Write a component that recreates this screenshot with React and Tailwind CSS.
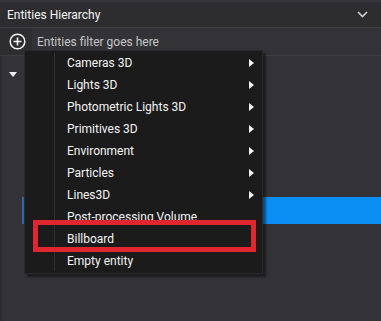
import React from 'react';

const menuItems = [
  { label: 'Cameras 3D', sub: true },
  { label: 'Lights 3D', sub: true },
  { label: 'Photometric Lights 3D', sub: true },
  { label: 'Primitives 3D', sub: true },
  { label: 'Environment', sub: true },
  { label: 'Particles', sub: true },
  { label: 'Lines3D', sub: true },
  { label: 'Post-processing Volume', sub: false },
  { label: 'Billboard', sub: false, marked: true },
  { label: 'Empty entity', sub: false },
];

const SubArrow = () => (
  <svg width="5" height="8" viewBox="0 0 5 8">
    <path d="M0 0 L5 4 L0 8 Z" fill="#f2f2f2" />
  </svg>
);

const App = () => {
  return (
    <div
      className="relative w-[381px] h-[321px] overflow-hidden bg-[#2d2d30] text-[#f4f4f4] flex flex-col"
      style={{ fontFamily: 'Roboto, "Noto Sans", sans-serif' }}
    >
      {/* header */}
      <div className="h-[28px] border-t-2 border-[#38383c] border-b border-b-[#3e3e42] flex items-center justify-between pl-[7px] pr-[13px]">
        <span className="text-[12px] leading-none">Entities Hierarchy</span>
        <svg width="11" height="7" viewBox="0 0 11 7">
          <path d="M1 1 L5.5 5.5 L10 1" stroke="#d0d0d0" strokeWidth="1.6" fill="none" />
        </svg>
      </div>

      {/* filter row */}
      <div className="h-[28px] flex border-b border-[#3e3e42]">
        <div className="w-[32px] flex items-center justify-center pl-[2px]">
          <svg width="17" height="17" viewBox="0 0 17 17">
            <circle cx="8.5" cy="8.5" r="7.3" stroke="#f4f4f4" strokeWidth="1.5" fill="none" />
            <path d="M8.5 4.5 V12.5 M4.5 8.5 H12.5" stroke="#f4f4f4" strokeWidth="1.6" />
          </svg>
        </div>
        <div className="flex-1 bg-[#333337] flex items-center pl-[5px] text-[12px] text-[#c6c6c6]">
          Entities filter goes here
        </div>
      </div>

      {/* tree */}
      <div className="flex-1 bg-[#333337] border-l-2 border-[#2d2d30] pt-[6px]">
        <div className="h-[27px] flex items-start pl-[7px] pt-[10px]">
          <svg width="8" height="5" viewBox="0 0 8 5">
            <path d="M0 0 H8 L4 5 Z" fill="#f0f0f0" />
          </svg>
        </div>
        <div className="h-[108px]" />
        <div className="h-[27px] ml-[20px] bg-[#0a8ef2] border-l-2 border-[#2f66a3]" />
      </div>

      {/* context menu */}
      <div className="absolute left-[24px] top-[50px] w-[239px] bg-[#1b1b1c] border border-[#2a2a2d] py-[1px] shadow-[3px_3px_2px_rgba(0,0,0,0.45)]">
        <div className="absolute left-[29px] top-[2px] bottom-[2px] w-px bg-[#303033]" />
        {menuItems.map((item) => (
          <div key={item.label} className="relative h-[22px] flex items-center pl-[42px] pr-[8px] text-[12px]">
            <span className="flex-1">{item.label}</span>
            {item.sub && <SubArrow />}
            {item.marked && (
              <div className="absolute left-[8px] top-[-8px] w-[223px] h-[32px] border-[5px] border-[#e0262e]" />
            )}
          </div>
        ))}
      </div>
    </div>
  );
};

export default App;
